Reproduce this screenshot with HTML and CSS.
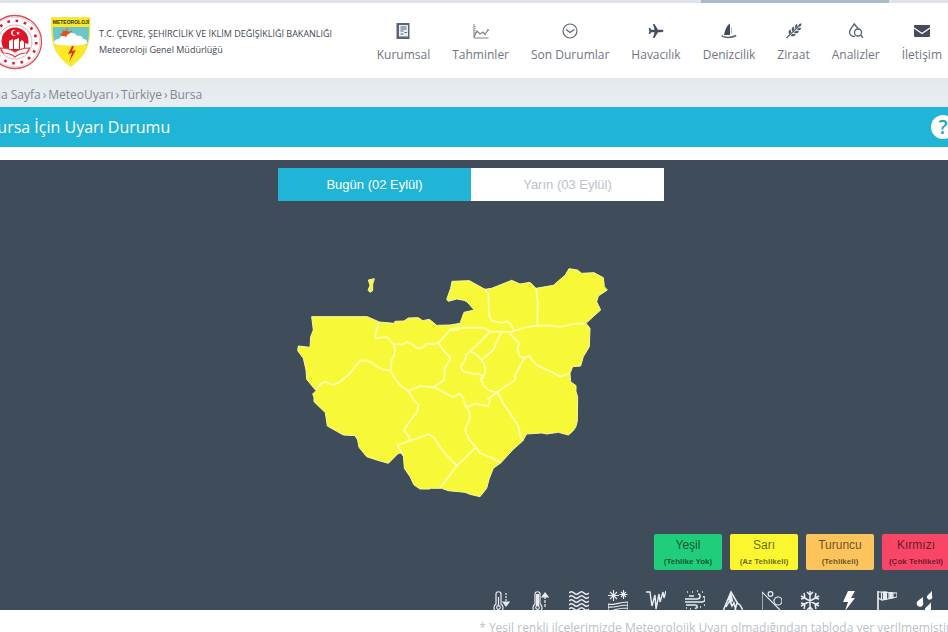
FILE: index.html
```html
<!DOCTYPE html>
<html lang="tr">
<head>
<meta charset="utf-8">
<meta name="viewport" content="width=device-width, initial-scale=1">
<title>Bursa İçin Uyarı Durumu</title>
<link rel="stylesheet" href="styles.css">
</head>
<body>
<div class="topbar"><span class="topbar-tab"></span></div>
<header class="header">
  <a class="brand" href="#">
    <svg class="seal" viewBox="0 0 56 56" aria-hidden="true">
      <circle cx="28" cy="28" r="26.5" fill="#fff" stroke="#d5505c" stroke-width="1.3"/>
      <circle cx="28" cy="28" r="24.8" fill="none" stroke="#e9a3a9" stroke-width=".6"/>
      <circle cx="28" cy="28" r="21.3" fill="none" stroke="#cf2334" stroke-width="2.6" stroke-dasharray="2.6 5.765"/>
      <circle cx="28" cy="28" r="17" fill="none" stroke="#e08b93" stroke-width=".7"/>
      <circle cx="28" cy="27" r="13.5" fill="#dc1626"/>
      <path d="M29 16.500a3 3 0 1 0 0 4.600a2.500 2.500 0 1 1 0-4.600zM31 17.200l.6 1.200 1.300.1-1 .9.4 1.300-1.300-.7-1.200.7.4-1.300-1-.9 1.300-.1z" fill="#fff"/>
      <path d="M22 27l4-2v10h-4zM27 26l5-2v11h-5zM33 28l2-2 2 2v7h-4zM38 29l3 1v5h-3z" fill="#fff"/>
      <path d="M13.500 34c5 0 10 1 14.500 4 4.500-3 9.500-4 14.500-4-1 3-2 4-3 5-4 0-8 1-11.500 4-3.500-3-7.500-4-11.500-4-1-1-2-2-3-5z" fill="#fff" stroke="#d93e4b" stroke-width="1.200"/>
    </svg>
    <svg class="shield" viewBox="0 0 42 52" aria-hidden="true">
      <path d="M1.500 1.500h38.500c0 20 1 35-19.200 49C.5 36.500 1.500 21.500 1.500 1.500z" fill="#fce826" stroke="#f0e85c" stroke-width="1"/>
      <path d="M3 11h36c0 7 0 12-2 18H5C3 23 3 18 3 11z" fill="#6cc5c9"/>
      <circle cx="16" cy="19" r="4.500" fill="#e4521b"/>
      <path d="M10 19l2-1M12 14l2 2M17 12v2M22 15l-2 1" stroke="#e4521b"/>
      <path d="M4 28c-1-4 3-5 5-5 1-3 5-4 7-2 2-5 9-5 11-1 4-1 6 1 6 3 3 0 5 2 4 5-6 2-27 2-33 0z" fill="#fff"/>
      <path d="M22 30l-4 8 4-1-3 9 7-12-4 1 2-5z" fill="#e3311d"/>
      <text x="21" y="8" text-anchor="middle" class="shield-text">METEOROLOJİ</text>
    </svg>
    <span class="brand-text"><span>T.C. ÇEVRE, ŞEHİRCİLİK VE İKLİM DEĞİŞİKLİĞİ BAKANLIĞI</span><span>Meteoroloji Genel Müdürlüğü</span></span>
  </a>
  <nav class="nav">
    <a href="#"><svg viewBox="0 0 16 16"><path d="M1.500 0h13v16h-13z" fill="#5b6576"/><path d="M4 2h9v11.500H4z" fill="#e9ecf0"/><path d="M5.500 4h6M5.500 6h6M5.500 8h3M9.500 9.500h2.500M5.500 11h3M3 14.700h10" stroke="#5b6576" stroke-width="1.100"/></svg>Kurumsal</a>
    <a href="#"><svg viewBox="0 0 16 16" fill="none" stroke="#7d8593"><path d="M1 1v14h14.500" stroke-width="1"/><path d="M1 14L4 8l3 3 3-2 2 2.500L15 7" stroke-width="1.300"/><circle cx="15" cy="7" r=".6"/><path d="M2 3v10" stroke-dasharray="1 1"/></svg>Tahminler</a>
    <a href="#"><svg viewBox="0 0 16 16" fill="none" stroke="#5d6675" stroke-width="1.200"><circle cx="8" cy="8" r="7"/><path d="M4 6.500L8 9.500l4.500-3" stroke-width="1.400"/></svg>Son Durumlar</a>
    <a href="#"><svg viewBox="0 0 16 16"><path d="M15.500 8c0 .7-1 1.200-2.500 1.200h-3L6.500 15H5l1.500-5.800H3.300L2 11H.7l.7-3-.7-3H2l1.300 1.800h3.200L5 1h1.500L10 6.800h3c1.500 0 2.500.5 2.500 1.200z" fill="#465063"/></svg>Havacılık</a>
    <a href="#"><svg viewBox="0 0 16 16"><path d="M9 .5v11.500H3C4 8 5 3 9 .5z" fill="#404a5c"/><path d="M10 3c1 3 1 6 0 9" fill="#8b929e"/><path d="M.8 12.500c2 2.500 10 2.500 14.400 0" fill="none" stroke="#5a6474" stroke-width="1.500"/></svg>Denizcilik</a>
    <a href="#"><svg viewBox="0 0 16 16"><path d="M.5 15L14 2" stroke="#505a6b" stroke-width="1.100"/><path d="M3.200 11.500C2 9 2.500 7.500 4.500 6.500c1 1.500.7 3.300-.6 4.500zM6.300 8.500C5.200 6 5.700 4.500 7.700 3.500c1 1.500.7 3.300-.6 4.500zM9.500 5.500C8.500 3.300 9 1.800 11 1c.8 1.500.5 2.800-.8 4zM4.800 12.800c2.500 1 4 .5 5-1.300-1.500-1-3.300-.8-4.500.5zM8 9.800c2.500 1 4 .5 5-1.300-1.500-1-3.300-.8-4.500.5zM11 6.800c2.300.8 3.500.2 4.300-1.600-1.500-.8-2.800-.5-4 .8zM12.500 3.500L13 1l2.500-.7L15 3z" fill="#505a6b"/></svg>Ziraat</a>
    <a href="#"><svg viewBox="0 0 16 16" fill="none" stroke="#555f70" stroke-width="1.300"><path d="M7 13.300C4 14 1.500 12 1.500 9.300 1.500 6.500 4 4.500 6.300.8 8 3.500 9.500 4.500 10.500 6"/><circle cx="10" cy="9.500" r="3.500"/><path d="M12.500 12l2.500 2.800"/></svg>Analizler</a>
    <a href="#"><svg viewBox="0 0 16 16"><rect y="2" width="16" height="12" rx="1" fill="#424c5e"/><path d="M0 5l8 5.500L16 5" fill="none" stroke="#fff" stroke-width="1.300"/></svg>İletişim</a>
  </nav>
</header>
<nav class="crumbs"><a href="#">Ana Sayfa</a><span>›</span><a href="#">MeteoUyarı</a><span>›</span><a href="#">Türkiye</a><span>›</span><a href="#">Bursa</a></nav>
<div class="titlebar"><h1>Bursa İçin Uyarı Durumu</h1><button class="help" aria-label="Yardım">?</button></div>
<main class="panel">
  <div class="stage">
    <div class="tabs"><button class="tab active">Bugün (02 Eylül)</button><button class="tab">Yarın (03 Eylül)</button></div>
    <svg class="map" viewBox="0 0 1086 735" aria-hidden="true" stroke-linejoin="round">
      <g fill="#f7f938" stroke="#f7f7a0" stroke-width="3">
        <path d="M65 170H232L268 186 312 190 315 184 342 183 355 174 385 173 398 182 418 178 440 196 480 195 510 190 522 157 553 150C540 138 535 125 522 121L500 117 475 124 470 118 482 85 486 64 538 62 585 88 605 85 665 61 690 72 720 67 738 85 790 76 825 46 837 26 862 30 875 40 912 38 940 53 943 80 952 90 925 108 920 125 932 150 915 165 888 190 900 205 898 260 880 290 872 318 848 320 840 340 842 365 858 377 858 395 863 410 862 480C860 500 855 510 835 525L805 517 770 522 755 519 710 522 698 543 670 568 633 608 610 625 598 655 590 685 570 710 540 703 525 697 475 692 455 685 425 685 417 687 390 687 372 675 360 650 343 625 340 585C333 577 325 578 315 590L295 610 260 600 230 590 207 562 203 540 195 527 160 525 112 498 106 458 72 425 72 412 68 402 78 392 50 358 48 330 40 295 23 272 25 258 60 262 62 230 70 210z"/>
        <path d="M235 60L253 56 248 73 248 92 241 97 234 91 240 76z"/>
      </g>
      <g fill="none" stroke="#fdfdb4" stroke-width="5">
        <path d="M266 188C262 205 254 220 256 234L290 231 300 240 310 252 338 254 350 246 362 250 382 265 398 262 410 250 430 253 446 248M310 252C318 265 318 280 305 300L302 330M78 390L92 372 105 365 130 375C150 370 175 345 190 328L210 302C225 299 245 305 258 317 275 330 290 332 302 330L312 352 330 375 355 393M446 248L480 210H508M446 248C452 265 465 275 482 295L464 325 462 360 430 382 390 378 355 393"/>
        <g transform="translate(450 0)">
          <path d="M28 208L60 203 130 203 150 214 215 216 250 204 280 198 330 196 360 201 400 192 438 190M135 88L145 103 147 165 155 182 185 189 200 184 212 192 223 214M288 85L293 120 292 198M150 214L122 245 90 274 78 284 76 300 62 321 70 335 98 341 120 342 132 356M185 217L172 240 160 270 125 300C115 290 105 277 90 274M125 300C135 310 136 320 134 343L122 356 130 375 145 390 165 397M208 220L238 250 232 264 240 290 253 294 266 287 290 315 320 330 340 338 360 350 390 340M253 294L226 345 224 362 195 380 172 396"/>
        </g>
        <g transform="translate(0 330)">
          <path d="M355 63L370 88 387 105 380 128 362 150 342 180 360 205 353 215 322 225 340 257M353 215L415 193 430 200 450 230 462 247 500 287 480 315 452 352M430 50L490 82 508 70 520 84"/>
        </g>
        <g transform="translate(450 330)">
          <path d="M70 84L78 112 87 120 90 145 75 180 88 210 108 232 120 250 150 261 183 278M78 112L105 101 145 108 150 92 144 87 172 66 190 100 210 130 235 168 240 195 248 213M108 232L52 286"/>
        </g>
      </g>
    </svg>
  </div>
  <div class="legend">
    <div class="level green"><span>Yeşil</span><small>(Tehlike Yok)</small></div>
    <div class="level yellow"><span>Sarı</span><small>(Az Tehlikeli)</small></div>
    <div class="level orange"><span>Turuncu</span><small>(Tehlikeli)</small></div>
    <div class="level red"><span>Kırmızı</span><small>(Çok Tehlikeli)</small></div>
  </div>
  <div class="events">
    <svg viewBox="0 0 20 22"><path d="M4 14V4c0-3 5-3 5 0v10a4.500 4.500 0 1 1-5 0z"/><path d="M6.500 7v9"/><circle cx="6.500" cy="17.500" r="1.800"/><path d="M14 3v9" stroke-dasharray="2 1"/><path d="M11 12l3 4 3-4z" fill="#e9edf1"/></svg>
    <svg viewBox="0 0 20 22"><path d="M4 14V4c0-3 5-3 5 0v10a4.500 4.500 0 1 1-5 0z"/><path d="M6.500 4v12" stroke-width="3"/><circle cx="6.500" cy="17.500" r="1.800"/><path d="M14 17V6" stroke-dasharray="3 1"/><path d="M11 7l3-4 3 4z" fill="#e9edf1"/></svg>
    <svg viewBox="0 0 20 22"><path d="M0 3q2.500-2.500 5 0t5 0 5 0 5 0M0 7q2.500-2.500 5 0t5 0 5 0 5 0M0 11q2.500-2.500 5 0t5 0 5 0 5 0M0 15q2.500-2.500 5 0t5 0 5 0 5 0M0 19q2.500-2.500 5 0t5 0 5 0 5 0" stroke-width="1.600"/></svg>
    <svg viewBox="0 0 20 22"><path d="M2 2l7 7M9 2L2 9M5.500 0v11M0 5.500h11M13 2l5 5M18 2l-5 5M15.500 0v9M11.500 4.500h8" stroke-width="1.100"/><path d="M0 21v-7c5 2 10-2 20-2v9M0 17c7 1 11-2 20-2M4 21c5-3 10-3 16-3"/></svg>
    <svg viewBox="0 0 20 22"><path d="M0 2h4l2 14 3-11 1 14L13 4l1 8 3-10 1 6 2-7" stroke-width="1.400"/></svg>
    <svg viewBox="0 0 20 22"><path d="M0 9h12c4 0 4-5 1-5M0 12h17c4 0 4-6 1-5M1 15h9c3 0 3 4 0 3M4 6h5" stroke-width="1.500"/><path d="M2 2h1M7 2h1M17 2h1M12 1h1M1 18h1M5 19h1M15 17h1M19 15h1" stroke-width="1.600"/></svg>
    <svg viewBox="0 0 20 22"><path d="M0 21L8 2l7 12M3 17l4-7 2 6 2-3 2 8M12 20l2-7 3 2 4 7" stroke-width="1.500"/><path d="M8 2l-4 9 2-1 1 5 2-4 2 3z" fill="#e9edf1" stroke="none"/></svg>
    <svg viewBox="0 0 20 22"><path d="M0 22V2l18 18"/><circle cx="8.500" cy="4" r="2.400"/><circle cx="16" cy="11" r="4"/></svg>
    <svg viewBox="0 0 20 22"><path d="M10 1v20M1 6l18 10M19 6L1 16M7 2l3 3 3-3M7 20l3-3 3 3M1 9l4-1-1-5M19 13l-4 1 1 5M19 9l-4-1 1-5M1 13l4 1-1 5" stroke-width="1.500"/></svg>
    <svg viewBox="0 0 20 22"><path d="M9 1h7l-4 7h4L6 21l3-9H4z" fill="#fff" stroke="none"/></svg>
    <svg viewBox="0 0 20 22"><path d="M1 22V1" stroke-width="1.700"/><path d="M1 2h4l15 1v4L5 10 1 8M4.500 2v8M12 2.500v6M16 3v5"/><path d="M6.500 2h3v7.500h-3zM13 3h2v5h-2z" fill="#e9edf1"/></svg>
    <svg viewBox="0 0 20 22"><path d="M16 1v5a2.600 2.600 0 1 1-4-1zM7 7v5a3.300 3.300 0 1 1-6 0c1-2 4-3 6-5zM15 12v9H9c-1-4 4-5 6-9z" fill="#fff" stroke="none"/></svg>
  </div>
</main>
<p class="note">* Yeşil renkli ilçelerimizde Meteorolojik Uyarı olmadığından tabloda yer verilmemiştir.</p>
</body>
</html>
```
FILE: styles.css
```css
* { box-sizing: border-box; }
body {
  margin: 0;
  height: 100vh;
  overflow: hidden;
  background: #fff;
  font-family: "Open Sans", "Noto Sans", sans-serif;
  font-size: 12px;
  color: #6f7681;
}
a { color: inherit; text-decoration: none; }
button { border: 0; padding: 0; font-family: inherit; }

.topbar { display: flex; justify-content: flex-end; height: 3px; padding-right: 59px; background: #dfe4ea; }
.topbar-tab { width: 188px; background: #a9bccb; }

.header { display: flex; justify-content: space-between; height: 75px; padding-right: 6px; }
.brand { display: flex; align-items: center; margin-left: -13px; padding-top: 3px; }
.seal { width: 56px; height: 56px; }
.shield { width: 42px; height: 52px; margin: 0 7px; }
.shield-text { font: bold 5px "Liberation Sans", sans-serif; fill: #34350f; }
.brand-text { display: flex; flex-direction: column; font-size: 9px; line-height: 16px; color: #414754; white-space: nowrap; }
.nav { display: flex; gap: 22px; padding-top: 20px; }
.nav a { display: flex; flex-direction: column; align-items: center; gap: 8px; line-height: 16px; white-space: nowrap; }
.nav svg { width: 16px; height: 16px; }

.crumbs {
  display: flex;
  gap: 2px;
  height: 29px;
  padding-left: 1px;
  margin-left: -15px;
  line-height: 33px;
  color: #808890;
  background: linear-gradient(#e3e9ea, #e9eef4);
}
.titlebar { display: flex; align-items: center; justify-content: space-between; height: 40px; margin: 0 -7px 0 -13px; background: #20b5d6; }
.titlebar h1 { margin: 0; font-size: 16px; font-weight: 400; color: #fff; }
.help { width: 24px; height: 24px; border-radius: 50%; background: #fff; color: #20a5c5; font-size: 20px; font-weight: 600; line-height: 24px; }

.panel { margin-top: 13px; height: 450px; overflow: hidden; background: #3f4c5a; }
.stage { display: flex; flex-direction: column; align-items: center; padding: 8px 6px 0 0; }
.tabs { display: flex; }
.tab { width: 193px; height: 33px; background: #fff; color: #bac2ca; font: 13px "Liberation Sans", sans-serif; }
.tab.active { background: #20b5d6; color: #fff; }
.map { width: 362px; height: 245px; margin-top: 59px; }
.legend { display: flex; justify-content: flex-end; gap: 8px; margin: 29px -2px 0 0; }
.level {
  display: flex;
  flex-direction: column;
  align-items: center;
  width: 68px;
  height: 36px;
  border-radius: 2px;
  font: 12px/23px "Liberation Sans", sans-serif;
  color: rgba(0, 0, 0, 0.6);
}
.level small { font-size: 8px; line-height: 10px; font-weight: 700; white-space: nowrap; }
.green { background: #20cd7b; }
.yellow { background: #fbf62d; }
.orange { background: #fdc45b; }
.red { background: #f94566; }
.events { display: flex; justify-content: space-between; width: 444px; margin: 20px 12px 0 auto; }
.events svg { width: 20px; height: 22px; fill: none; stroke: #e9edf1; stroke-width: 1.2; }
.note { margin: 9px -6px 0 0; text-align: right; line-height: 18px; color: #bbc1c8; white-space: nowrap; }
```
